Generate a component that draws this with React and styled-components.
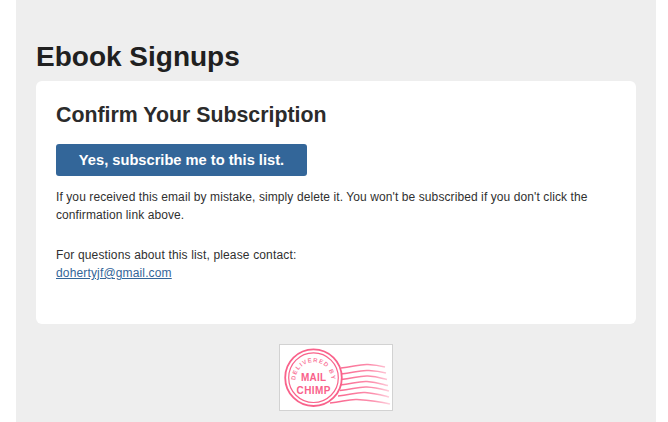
import React from "react";
import styled, { createGlobalStyle } from "styled-components";

const Global = createGlobalStyle`
  html, body { margin: 0; padding: 0; background: #fff; }
  body { font-family: "Liberation Sans", Arial, sans-serif; }
`;
const Page = styled.div`
  width: 640px;
  height: 422px;
  margin-left: 16px;
  background: #eeeeee;
  padding: 41px 20px 0;
  box-sizing: border-box;
  overflow: hidden;
`;
const Title = styled.h1`
  margin: 0 0 9px;
  font-size: 28px;
  line-height: 31px;
  font-weight: 700;
  color: #202020;
`;
const Card = styled.div`
  height: 243px;
  box-sizing: border-box;
  background: #fff;
  border-radius: 6px;
  padding: 20px;
`;
const Heading = styled.h2`
  margin: 0 0 14px;
  font-size: 21.33px;
  line-height: 29px;
  font-weight: 700;
  color: #2b2b2b;
`;
const Cta = styled.a`
  display: block;
  width: 251px;
  height: 32px;
  border-radius: 3px;
  background: #336699;
  color: #fff;
  font-size: 14.67px;
  font-weight: 700;
  line-height: 32px;
  text-align: center;
  text-decoration: none;
`;
const Para = styled.p`
  margin: ${(p) => p.$top}px 0 0;
  font-size: 12px;
  line-height: 18px;
  letter-spacing: ${(p) => p.$track}px;
  color: #303030;
`;
const Mail = styled.a`
  color: #336699;
  text-decoration: underline;
`;
const Badge = styled.div`
  width: 114px;
  height: 67px;
  margin: 20px auto 0;
  box-sizing: border-box;
  background: #fff;
  border: 1px solid #d2d2d2;
`;
const StampSvg = styled.svg`
  display: block;
`;

const wavePaths = [
  [61, 23, 105, 22],
  [61, 29, 106, 28],
  [61, 34.5, 107, 34.5],
  [60, 40, 108, 40.5],
  [60, 45.5, 109, 46],
  [58, 51, 109, 52],
  [50, 58, 110, 59],
];

const Stamp = () => (
  <StampSvg width="112" height="65" viewBox="0 0 112 65">
    <defs>
      <linearGradient id="fade" gradientUnits="userSpaceOnUse" x1="60" y1="0" x2="110" y2="0">
        <stop offset="0" stopColor="#fa6b92" />
        <stop offset="0.65" stopColor="#fc8fad" />
        <stop offset="1" stopColor="#fed3df" />
      </linearGradient>
      <path id="arc" d="M15.6 37 A 18 18 0 1 1 51.4 37" />
    </defs>
    {wavePaths.map(([x1, y1, x2, y2]) => (
      <path
        key={y1}
        d={`M${x1} ${y1} C ${x1 + 12} ${y1 - 1}, ${x1 + 18} ${y1 - 4}, ${x1 + 27} ${y1 - 3.5} S ${x2 - 8} ${y2 - 2}, ${x2} ${y2}`}
        fill="none"
        stroke="url(#fade)"
        strokeWidth="1.5"
      />
    ))}
    <circle cx="33.5" cy="32.7" r="28.3" fill="#fff" stroke="#f9628b" strokeWidth="1.8" />
    <circle cx="33.5" cy="32.7" r="24.8" fill="#fff" stroke="#f9628b" strokeWidth="1.2" />
    <text fontFamily="Liberation Sans, sans-serif" fontSize="6" fontWeight="700" fill="#f97a9c" letterSpacing="1">
      <textPath href="#arc" startOffset="50%" textAnchor="middle">DELIVERED BY</textPath>
    </text>
    <text x="33.5" y="35.5" textAnchor="middle" textLength="25" fontFamily="Liberation Sans, sans-serif" fontSize="10" fontWeight="700" fill="#f9628b">MAIL</text>
    <text x="33.5" y="48.5" textAnchor="middle" textLength="34" fontFamily="Liberation Sans, sans-serif" fontSize="10" fontWeight="700" fill="#f9628b">CHIMP</text>
  </StampSvg>
);

export default function App() {
  return (
    <>
      <Global />
      <Page>
        <Title>Ebook Signups</Title>
        <Card>
          <Heading>Confirm Your Subscription</Heading>
          <Cta href="#">Yes, subscribe me to this list.</Cta>
          <Para $top={12} $track={0.09}>If you received this email by mistake, simply delete it. You won't be subscribed if you don't click the confirmation link above.</Para>
          <Para $top={22} $track={0.15}>For questions about this list, please contact:<br /><Mail href="#">dohertyjf@gmail.com</Mail></Para>
        </Card>
        <Badge><Stamp /></Badge>
      </Page>
    </>
  );
}
